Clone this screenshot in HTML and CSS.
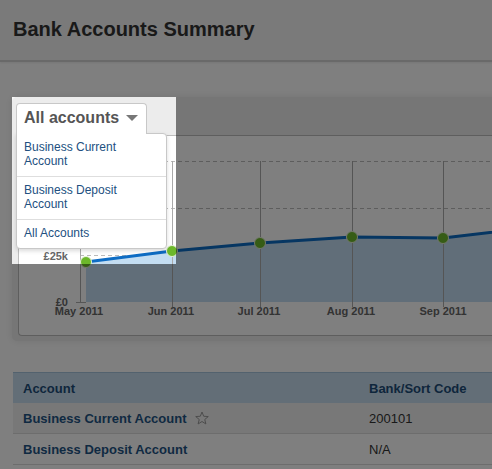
FILE: index.html
```html
<!DOCTYPE html>
<html>
<head>
    <title>Bank Accounts Summary</title>
    <link rel="stylesheet" href="styles.css">
</head>
<body>
<div class="page">
    <div class="header">
        <h1>Bank Accounts Summary</h1>
    </div>

    <div class="content">
        <div class="chart-box">
            <div class="tabs">
                <div class="tab">All accounts<span class="caret"></span></div>
                <ul class="menu">
                    <li>Business Current Account</li>
                    <li>Business Deposit Account</li>
                    <li>All Accounts</li>
                </ul>
            </div>
            <div class="chart">
                <svg width="600" height="199" viewBox="0 0 600 199">
                    <!-- grid -->
                    <g class="grid-h">
                        <line x1="61" y1="25.5" x2="600" y2="25.5"/>
                        <line x1="61" y1="72.5" x2="600" y2="72.5"/>
                        <line x1="61" y1="119.5" x2="600" y2="119.5"/>
                    </g>
                    <polygon class="area" points="67,126 153,115 241,107 333,101 424,102 516,91 600,82 600,166 67,166"/>
                    <g class="grid-v">
                        <line x1="61.5" y1="25" x2="61.5" y2="166"/>
                        <line x1="57" y1="166.5" x2="67" y2="166.5"/>
                        <line x1="153.5" y1="25" x2="153.5" y2="171"/>
                        <line x1="241.5" y1="25" x2="241.5" y2="171"/>
                        <line x1="333.5" y1="25" x2="333.5" y2="171"/>
                        <line x1="424.5" y1="25" x2="424.5" y2="171"/>
                    </g>
                    <polyline class="series" points="67,126 153,115 241,107 333,101 424,102 516,91 600,82"/>
                    <g class="dots">
                        <circle cx="67" cy="126" r="5.5"/>
                        <circle cx="153" cy="115" r="5.5"/>
                        <circle cx="241" cy="107" r="5.5"/>
                        <circle cx="333" cy="101" r="5.5"/>
                        <circle cx="424" cy="102" r="5.5"/>
                        <circle cx="516" cy="91" r="5.5"/>
                    </g>
                    <g class="axis-y">
                        <text x="49" y="124">£25k</text>
                        <text x="49" y="170">£0</text>
                    </g>
                    <g class="axis-x">
                        <text x="60" y="179">May 2011</text>
                        <text x="152" y="179">Jun 2011</text>
                        <text x="240" y="179">Jul 2011</text>
                        <text x="332" y="179">Aug 2011</text>
                        <text x="424" y="179">Sep 2011</text>
                    </g>
                </svg>
            </div>
        </div>

        <table class="accounts">
            <tr>
                <th class="col-name">Account</th>
                <th>Bank/Sort Code</th>
            </tr>
            <tr class="odd">
                <td><a href="#">Business Current Account</a>
                    <svg class="star" width="14" height="14" viewBox="0 0 14 14"><path d="M7 1L8.71 5.25L13.28 5.56L9.76 8.5L10.88 12.94L7 10.5L3.12 12.94L4.24 8.5L0.72 5.56L5.29 5.25Z"/></svg>
                </td>
                <td>200101</td>
            </tr>
            <tr>
                <td><a href="#">Business Deposit Account</a></td>
                <td>N/A</td>
            </tr>
        </table>
    </div>
</div>

<div class="spotlight"></div>
</body>
</html>
```

FILE: styles.css
```css
html, body { margin: 0; overflow: hidden; }
body { font-family: "Liberation Sans", Arial, sans-serif; background: #fff; color: #333; }
.page { width: 620px; }

.header { height: 62px; box-sizing: border-box; padding: 1px 13px 3px; background: #f4f4f4; border-bottom: 2px solid #d2d2d2; box-shadow: 0 1px 2px rgba(0, 0, 0, 0.08); }
.header h1 { margin: 0; font-size: 20px; line-height: 56px; color: #333; }

.content { padding: 35px 0 0 12px; }

.chart-box { background: #ececec; border-radius: 5px; padding: 6px 0 5px 6px; box-shadow: 0 0 8px rgba(0, 0, 0, 0.1); }
.tabs { position: relative; height: 32px; }
.tab { position: relative; z-index: 2; display: inline-flex; align-items: center; box-sizing: border-box; height: 31px; margin-left: -2px; padding: 0 8px 2px 7px; background: #fff; border: 1px solid #c8c8c8; border-bottom: 0; border-radius: 4px 4px 0 0; font-size: 16px; font-weight: bold; color: #555; }
.caret { display: inline-block; margin-left: 7px; border-left: 6px solid transparent; border-right: 6px solid transparent; border-top: 6px solid #777; }

.menu { position: absolute; z-index: 1; left: -2px; top: 30px; width: 151px; box-sizing: border-box; margin: 0; padding: 0; list-style: none; background: #fff; border: 1px solid #c8c8c8; border-radius: 0 4px 4px 4px; box-shadow: 0 2px 4px rgba(0, 0, 0, 0.15); }
.menu li { padding: 6px 7px 8px; font-size: 12px; line-height: 14px; color: #22507f; }
.menu li + li { border-top: 1px solid #dedede; }

.chart { height: 199px; background: #fff; border: 1px solid #bdbdbd; border-right: 0; border-radius: 4px 0 0 4px; overflow: hidden; }
.chart svg { display: block; }
.grid-h line { stroke: #bbb; stroke-dasharray: 4 3; }
.grid-v line { stroke: #aaa; }
.area { fill: #c3ddf2; }
.series { fill: none; stroke: #0d6cc4; stroke-width: 3; stroke-linejoin: round; }
.dots circle { fill: #6cb82a; stroke: #e6f2d8; stroke-width: 1; }
.axis-y text, .axis-x text { font-family: "Liberation Sans", Arial, sans-serif; font-size: 11px; font-weight: bold; fill: #666; }
.axis-y text { text-anchor: end; }
.axis-x text { text-anchor: middle; }

.accounts { margin: 31px 0 0 1px; width: 607px; border-collapse: separate; border-spacing: 0; font-size: 13px; }
.accounts th, .accounts td { height: 30px; padding: 0 10px; text-align: left; }
.accounts th { background: #c6dcef; border-top: 1px solid #a6c4dd; color: #1d4c78; }
.accounts .col-name { width: 326px; }
.accounts td { border-bottom: 1px solid #dadada; color: #333; }
.accounts .odd td { background: #f0f0f0; }
.accounts a { font-weight: bold; color: #1f5485; text-decoration: none; }
.star { vertical-align: -2px; margin-left: 5px; }
.star path { fill: none; stroke: #999; stroke-width: 1; }

.spotlight { position: absolute; z-index: 10; left: 12px; top: 97px; width: 164px; height: 167px; box-shadow: 0 0 0 3000px rgba(0, 0, 0, 0.5); pointer-events: none; }
```
